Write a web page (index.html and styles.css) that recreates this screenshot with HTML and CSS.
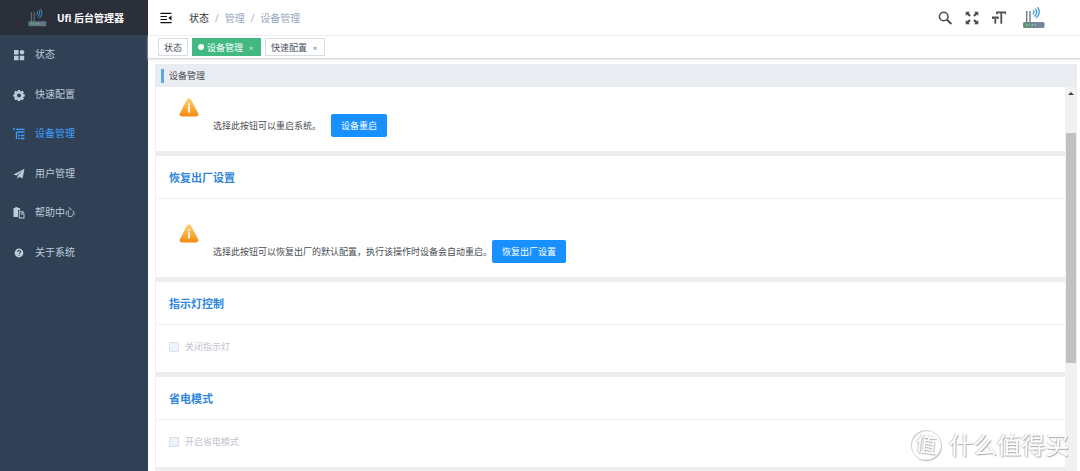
FILE: index.html
```
<!DOCTYPE html>
<html lang="zh-CN">
<head>
<meta charset="utf-8">
<title>Ufi 后台管理器</title>
<link rel="stylesheet" href="styles.css">
</head>
<body>
<svg class="defs" aria-hidden="true">
  <defs>
    <linearGradient id="amber" x1="0" y1="0" x2="0" y2="1"><stop offset="0" stop-color="#fbd27a"/><stop offset=".5" stop-color="#f8b040"/><stop offset="1" stop-color="#f28a10"/></linearGradient>
    <symbol id="router" viewBox="0 0 22 24">
      <path d="M3.7 5v12M7 5v12" stroke="#6c7c88" stroke-width="1.4" fill="none"/>
      <rect x="0" y="16" width="21.500" height="6" rx="1.500" fill="#72879a"/>
      <rect x="1" y="16.500" width="8" height="5" rx="1" fill="#5d9274"/>
      <path d="M3 19h1M5.500 19h1M8.500 19h1.300M11.500 19h1.300" stroke="#cfe6d8" stroke-width="1.200"/>
      <path d="M10 4.500q2 1.800 0 4M12 2.500q3.300 3.800 0 8M14 .8q4.500 5.200 0 11" transform="rotate(8 12 6)" stroke="#3f9ad6" stroke-width="1.300" fill="none"/>
    </symbol>
    <symbol id="warn" viewBox="0 0 20 19">
      <path d="M8 1.500Q10-.8 12 1.500L19.300 15.500Q20 18.500 17 18.500H3Q0 18.500.7 15.500Z" fill="url(#amber)"/>
      <circle cx="10" cy="6.300" r="1" fill="#fff"/><path d="M10 8.300v6.200" stroke="#fff" stroke-width="1.700" fill="none"/>
    </symbol>
  </defs>
</svg>
<div class="app">
  <aside class="sidebar">
    <div class="brand"><svg class="brand-logo"><use href="#router"/></svg><h1>Ufi 后台管理器</h1></div>
    <nav class="menu">
      <a href="#"><svg viewBox="0 0 12 12"><path d="M1 1h4.500v4.500H1zM1 6.700h4.500v4.500H1zM6.700 6.700h4.500v4.500H6.700z"/><circle cx="9" cy="3.200" r="2.300"/></svg>状态</a>
      <a href="#"><svg viewBox="0 0 12 12"><path fill-rule="evenodd" d="M4.900.9h2.200l.3 1.300.8.300 1.200-.7 1.500 1.500-.7 1.200.3.800 1.300.3v1.900l-1.300.3-.3.900.7 1.100-1.500 1.500-1.200-.7-.8.300-.3 1.300H4.900l-.3-1.300-.8-.3-1.200.7L1.100 9.800l.7-1.100-.3-.9L.2 7.500V5.600l1.300-.3.300-.8-.7-1.200 1.500-1.500 1.200.7.800-.3ZM6 4.500a2 2 0 1 0 0 4 2 2 0 0 0 0-4Z"/></svg>快速配置</a>
      <a href="#" class="active"><svg viewBox="0 0 12 12"><path d="M0 1h2M3 1.300h8.500M4 4h7.500M5 7.500h1.500M7.500 7.500h4M5 10.500h1.500M7.500 10.500h4M3.500 4v7" stroke="currentColor" stroke-width="1.300" fill="none"/></svg>设备管理</a>
      <a href="#"><svg viewBox="0 0 12 12"><path d="M11.500.8 9.500 10.500 6.300 8.800 4.500 11V8L9.500 3 3.600 7.500.5 6.500Z"/></svg>用户管理</a>
      <a href="#"><svg viewBox="0 0 12 12"><path fill-rule="evenodd" d="M.5 1h1.500V.2h3V1h2v2H5v7H.5ZM5.800 3.800H8.500V6.500h3V11.500H5.800ZM6.800 4.800v5.700h3.700v-3H7.800V4.800ZM9.200 3.600 11.500 5.900H9.200Z"/></svg>帮助中心</a>
      <a href="#"><svg viewBox="0 0 12 12"><circle cx="6" cy="6" r="4.400"/><path d="M4.600 4.900q.1-1.400 1.500-1.400t1.400 1.200Q7.500 5.500 6.100 6.600M6.100 7.700v1" stroke="#304156" stroke-width="1.100" fill="none"/></svg>关于系统</a>
    </nav>
  </aside>
  <div class="main">
    <header class="navbar">
      <button class="icon-button" aria-label="折叠菜单"><svg class="fold" viewBox="0 0 12 12"><path d="M.5 1.300h11M.5 4.500h6.500M.5 7.500h6.500M.5 10.700h11" stroke="currentColor" stroke-width="1.200"/><path d="M11.500 3.600v4.800L8.300 6Z" fill="currentColor"/></svg></button>
      <nav class="breadcrumb"><a href="#">状态</a><i>/</i><span>管理</span><i>/</i><span>设备管理</span></nav>
      <div class="tools">
        <button class="icon-button" aria-label="搜索"><svg viewBox="0 0 14 14"><circle cx="5.700" cy="5.500" r="4.300" fill="none" stroke="currentColor" stroke-width="1.600"/><path d="m9 8.800 3.800 3.600" stroke="currentColor" stroke-width="2" stroke-linecap="round"/></svg></button>
        <button class="icon-button" aria-label="全屏"><svg viewBox="0 0 14 14"><path d="M.7.700h4.300L3.700 2 5.800 4.200 4.300 5.700 2 3.600.7 5ZM13.300.7v4.300L12 3.600 9.700 5.700 8.200 4.200 10.300 2 9 .7ZM.7 13.300V9L2 10.300 4.300 8.200 5.800 9.700 3.700 12 5 13.300ZM13.300 13.300H9L10.300 12 8.200 9.700 9.700 8.200 12 10.300 13.300 9Z" fill="currentColor"/></svg></button>
        <button class="icon-button" aria-label="字号"><svg viewBox="0 0 14 14"><path d="M5 3.300V1.300h8.500v2M9.300 1.300v11.500M.8 8V6.300h5V8M3.300 6.300v6.500" fill="none" stroke="currentColor" stroke-width="1.800"/></svg></button>
        <svg class="avatar"><use href="#router"/></svg>
      </div>
    </header>
    <nav class="tags">
      <a href="#">状态</a>
      <a href="#" class="current"><b class="dot"></b>设备管理<span class="close">×</span></a>
      <a href="#">快速配置<span class="close">×</span></a>
    </nav>
    <main class="page">
      <h2 class="page-title">设备管理</h2>
      <div class="viewport">
        <div class="cards">
          <section class="card">
            <div class="action scrolled"><svg class="warn"><use href="#warn"/></svg><p>选择此按钮可以重启系统。</p><button class="primary">设备重启</button></div>
          </section>
          <section class="card">
            <h3>恢复出厂设置</h3>
            <div class="action"><svg class="warn"><use href="#warn"/></svg><p>选择此按钮可以恢复出厂的默认配置，执行该操作时设备会自动重启。</p><button class="primary">恢复出厂设置</button></div>
          </section>
          <section class="card">
            <h3>指示灯控制</h3>
            <label class="option"><input type="checkbox" disabled>关闭指示灯</label>
          </section>
          <section class="card">
            <h3>省电模式</h3>
            <label class="option"><input type="checkbox" disabled>开启省电模式</label>
          </section>
        </div>
        <div class="scrollbar" aria-hidden="true"><div class="arrow"></div><div class="thumb"></div></div>
      </div>
    </main>
  </div>
</div>
<div class="watermark"><span class="seal">值</span><span>什么值得买</span></div>
</body>
</html>
```
FILE: styles.css
```
* { box-sizing: border-box; }
body {
  margin: 0;
  font-family: "Open Sans", "Noto Sans CJK SC", sans-serif;
  font-size: 9px;
  color: #484c52;
  background: #fff;
}
h1, h2, h3, p { margin: 0; }
a { color: inherit; text-decoration: none; }
button { font: inherit; border: 0; padding: 0; background: none; color: inherit; }
.defs { position: absolute; width: 0; height: 0; }
.app { display: flex; height: 100vh; overflow: hidden; }

.sidebar { flex: 0 0 148px; background: #304156; color: #bfcbd9; }
.brand {
  display: flex; align-items: center; gap: 10px;
  height: 35px; padding-left: 28px;
  background: #2b2f3a; color: #fff;
}
.brand h1 { font-size: 10px; font-weight: 700; white-space: nowrap; }
.brand-logo { width: 19px; height: 20px; opacity: .8; }
.menu a {
  display: flex; align-items: center; gap: 10px;
  height: 39px; margin-bottom: 1px; padding-left: 13px;
  font-size: 10px; line-height: 15px;
}
.menu a:nth-child(even) { margin-bottom: 0; }
.menu svg { width: 12px; height: 12px; fill: currentColor; }
.menu .active { color: #409eff; }

.main { flex: 1; min-width: 0; display: flex; flex-direction: column; }
.navbar {
  flex: none; display: flex; align-items: center;
  height: 35px; padding: 0 35px 0 12px;
}
.icon-button { display: flex; color: #4c5055; }
.icon-button svg { width: 14px; height: 14px; }
.icon-button .fold { width: 12px; height: 12px; color: #111; }
.breadcrumb {
  display: flex; gap: 6px; margin-left: 17px;
  font-size: 10px; line-height: 14px; color: #97a8be;
}
.breadcrumb a { color: #303133; }
.breadcrumb i { color: #a8adb6; font-style: normal; }
.tools { display: flex; align-items: center; gap: 13px; margin-left: auto; }
.avatar { width: 22px; height: 24px; margin-left: 4px; }

.tags {
  flex: none; display: flex; align-items: center; gap: 4px;
  height: 24px; padding-left: 10px;
  border-top: 1px solid #f0f0f0; border-bottom: 1px solid #d8dce5;
  box-shadow: 0 1px 2px #e3e3e3;
}
.tags a {
  display: flex; align-items: center;
  height: 18px; padding: 0 5px;
  border: 1px solid #d8dce5; color: #495060;
}
.tags .current { background: #42b983; border-color: #42b983; color: #fff; }
.dot { width: 6px; height: 6px; margin-right: 3px; border-radius: 50%; background: #fff; }
.close { width: 8px; margin-left: 4px; text-align: center; font-size: 8px; opacity: .8; }

.page { flex: 1; min-height: 0; display: flex; flex-direction: column; padding: 5px 3px 0 7px; }
.page-title {
  flex: none; display: flex; align-items: center; gap: 5px;
  height: 23px; padding-left: 6px;
  background: #e9edf2; font-size: 9px; font-weight: 400;
}
.page-title::before { content: ""; width: 3px; height: 14px; background: #60a5e8; }
.viewport { flex: 1; min-height: 0; display: flex; overflow: hidden; }
.cards {
  flex: 1; min-width: 0; display: flex; flex-direction: column; gap: 5px;
  align-self: flex-start; padding-bottom: 5px; background: #eee;
}
.card { background: #fff; border-left: 1px solid #eee; }
.card h3 {
  height: 43px; padding-left: 13px;
  border-bottom: 1px solid #f0f0f0;
  font-size: 11px; line-height: 43px; color: #2f86dc;
}
.action { display: flex; align-items: flex-end; height: 78px; padding: 0 24px 14px 23px; }
.action.scrolled { height: 64px; }
.warn { flex: none; width: 20px; height: 19px; margin-right: 14px; margin-bottom: 20px; }
.action p { min-width: 118px; line-height: 22px; white-space: nowrap; }
.primary { height: 23px; padding: 0 10px; border-radius: 2px; background: #1890ff; color: #fff; }
.option {
  display: flex; align-items: center; gap: 6px;
  height: 47px; padding: 0 0 4px 13px; color: #c0c4cc;
}
.option input {
  appearance: none; width: 10px; height: 10px; margin: 0;
  border: 1px solid #dcdfe6; border-radius: 1px; background: #edf2fc;
}

.scrollbar {
  flex: 0 0 12px; display: flex; flex-direction: column; align-items: center;
  background: #f1f1f1;
}
.arrow { margin-top: 5px; border: 3px solid transparent; border-top: 0; border-bottom-color: #444; }
.thumb { width: 10px; height: 60%; margin-top: 38px; background: #c1c1c1; }

.watermark {
  position: absolute; right: 11px; bottom: 9px;
  display: flex; align-items: center; gap: 8px;
  font-size: 24px; line-height: 34px; color: #fff;
  text-shadow: 1px 1px 1px #aaa, -1px 0 1px #ccc;
}
.seal {
  width: 30px; height: 30px; border-radius: 50%;
  box-shadow: 1px 1px 1px #bbb, inset 1px 1px 1px #ccc;
  line-height: 28px; text-align: center; font-size: 21px;
  transform: rotate(8deg);
}
```
